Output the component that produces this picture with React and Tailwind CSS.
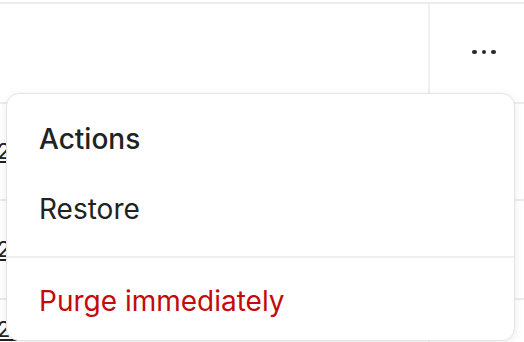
export default function App() {
    const rows = [
        { h: 'h-[98px]', stub: null },
        { h: 'h-[97px]', stub: '2' },
        { h: 'h-[99px]', stub: '2' },
        { h: 'h-[60px]', stub: '2:' },
    ];

    return (
        <div className="relative w-[524px] h-[342px] overflow-hidden bg-white font-['Inter',sans-serif]">
            <div className="pt-[2px]">
                <div className="border-t-[2px] border-[#ececec]">
                    {rows.map((r, i) => (
                        <div key={i} className={`flex ${r.h} ${i > 0 ? 'border-t-[2px] border-[#ececec]' : ''}`}>
                            <div className="w-[428px] overflow-hidden flex items-center">
                                {r.stub && (
                                    <span className="-ml-[12px] text-[22px] text-[#222] underline">1{r.stub}</span>
                                )}
                            </div>
                            <div className="flex-1 border-l-[2px] border-[#f0f0f0] flex items-center justify-center">
                                {i === 0 && (
                                    <div className="flex gap-[5px] ml-[14px] mb-[2px]">
                                        <span className="w-[4.5px] h-[4.5px] rounded-full bg-[#2a2a2a]" />
                                        <span className="w-[4.5px] h-[4.5px] rounded-full bg-[#2a2a2a]" />
                                        <span className="w-[4.5px] h-[4.5px] rounded-full bg-[#2a2a2a]" />
                                    </div>
                                )}
                            </div>
                        </div>
                    ))}
                </div>
            </div>

            {/* dropdown */}
            <div className="absolute left-[6px] top-[93px] w-[509px] h-[248px] rounded-[13px] border border-[#e4e4e4] bg-white shadow-[0_2px_8px_rgba(0,0,0,0.08)]">
                <div className="pt-[10px]">
                    <div className="h-[70px] flex items-center pl-[32px] text-[28px] font-medium text-[#222]">
                        Actions
                    </div>
                    <div className="h-[70px] flex items-center pl-[32px] text-[28px] text-[#222]">
                        Restore
                    </div>
                    <div className="mt-[12px] mb-[8px] border-t-[2px] border-[#efefef]" />
                    <div className="h-[70px] flex items-center pl-[32px] text-[28px] text-[#c40a0a]">
                        Purge immediately
                    </div>
                </div>
            </div>
        </div>
    );
}
